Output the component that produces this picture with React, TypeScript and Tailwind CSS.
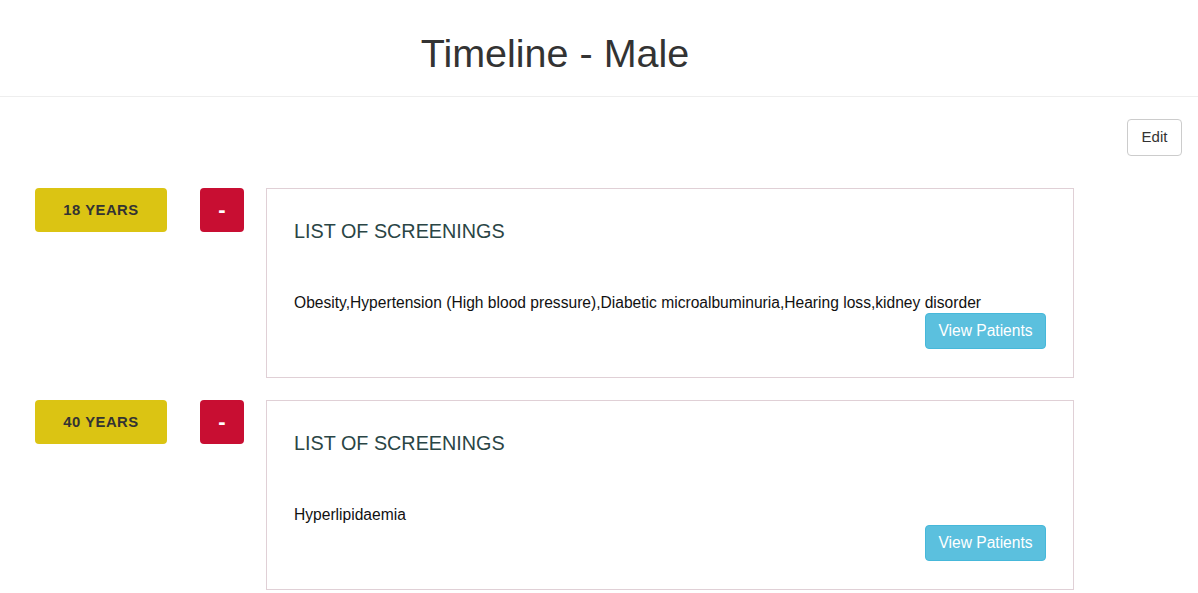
const ROWS = [
  {
    age: "18 YEARS",
    items:
      "Obesity,Hypertension (High blood pressure),Diabetic microalbuminuria,Hearing loss,kidney disorder",
  },
  { age: "40 YEARS", items: "Hyperlipidaemia" },
];

export default function App() {
  return (
    <div className="min-h-screen bg-white text-[#333] font-['Liberation_Sans',Arial,sans-serif]">
      <header className="h-[97px] border-b border-[#eee] flex items-start">
        <h1 className="w-[1110px] text-center text-[39.5px] leading-[44px] pt-[31px] text-[#333]">
          Timeline - Male
        </h1>
      </header>

      <div className="flex justify-end pr-[16px] pt-[22px]">
        <button className="h-[37px] w-[55px] rounded-[4px] border border-[#ccc] bg-white text-[15px] text-[#333]">
          Edit
        </button>
      </div>

      <div className="flex flex-col gap-[22px] pt-[32px] pl-[35px]">
        {ROWS.map((row) => (
          <div key={row.age} className="flex items-start">
            <div className="w-[132px] h-[44px] rounded-[4px] bg-[#dbc413] flex items-center justify-center text-[14.8px] font-bold tracking-[0.5px] text-[#333]">
              {row.age}
            </div>
            <button className="ml-[33px] w-[44px] h-[44px] rounded-[4px] bg-[#c80e32] text-white font-bold text-[22px] leading-none flex items-center justify-center">
              -
            </button>
            <div className="ml-[22px] w-[808px] h-[190px] border border-[#e0d0d6] pl-[27px] pr-[27px] pt-[31px] flex flex-col">
              <h3 className="text-[19.8px] leading-[22px] text-[#2a4545]">LIST OF SCREENINGS</h3>
              <p className="mt-[51px] text-[15.6px] leading-[20px] text-[#111]">{row.items}</p>
              <div className="flex justify-end">
                <button className="h-[36px] w-[121px] rounded-[4px] bg-[#5bc0de] border border-[#46b8da] text-white text-[15.6px]">
                  View Patients
                </button>
              </div>
            </div>
          </div>
        ))}
      </div>
    </div>
  );
}
